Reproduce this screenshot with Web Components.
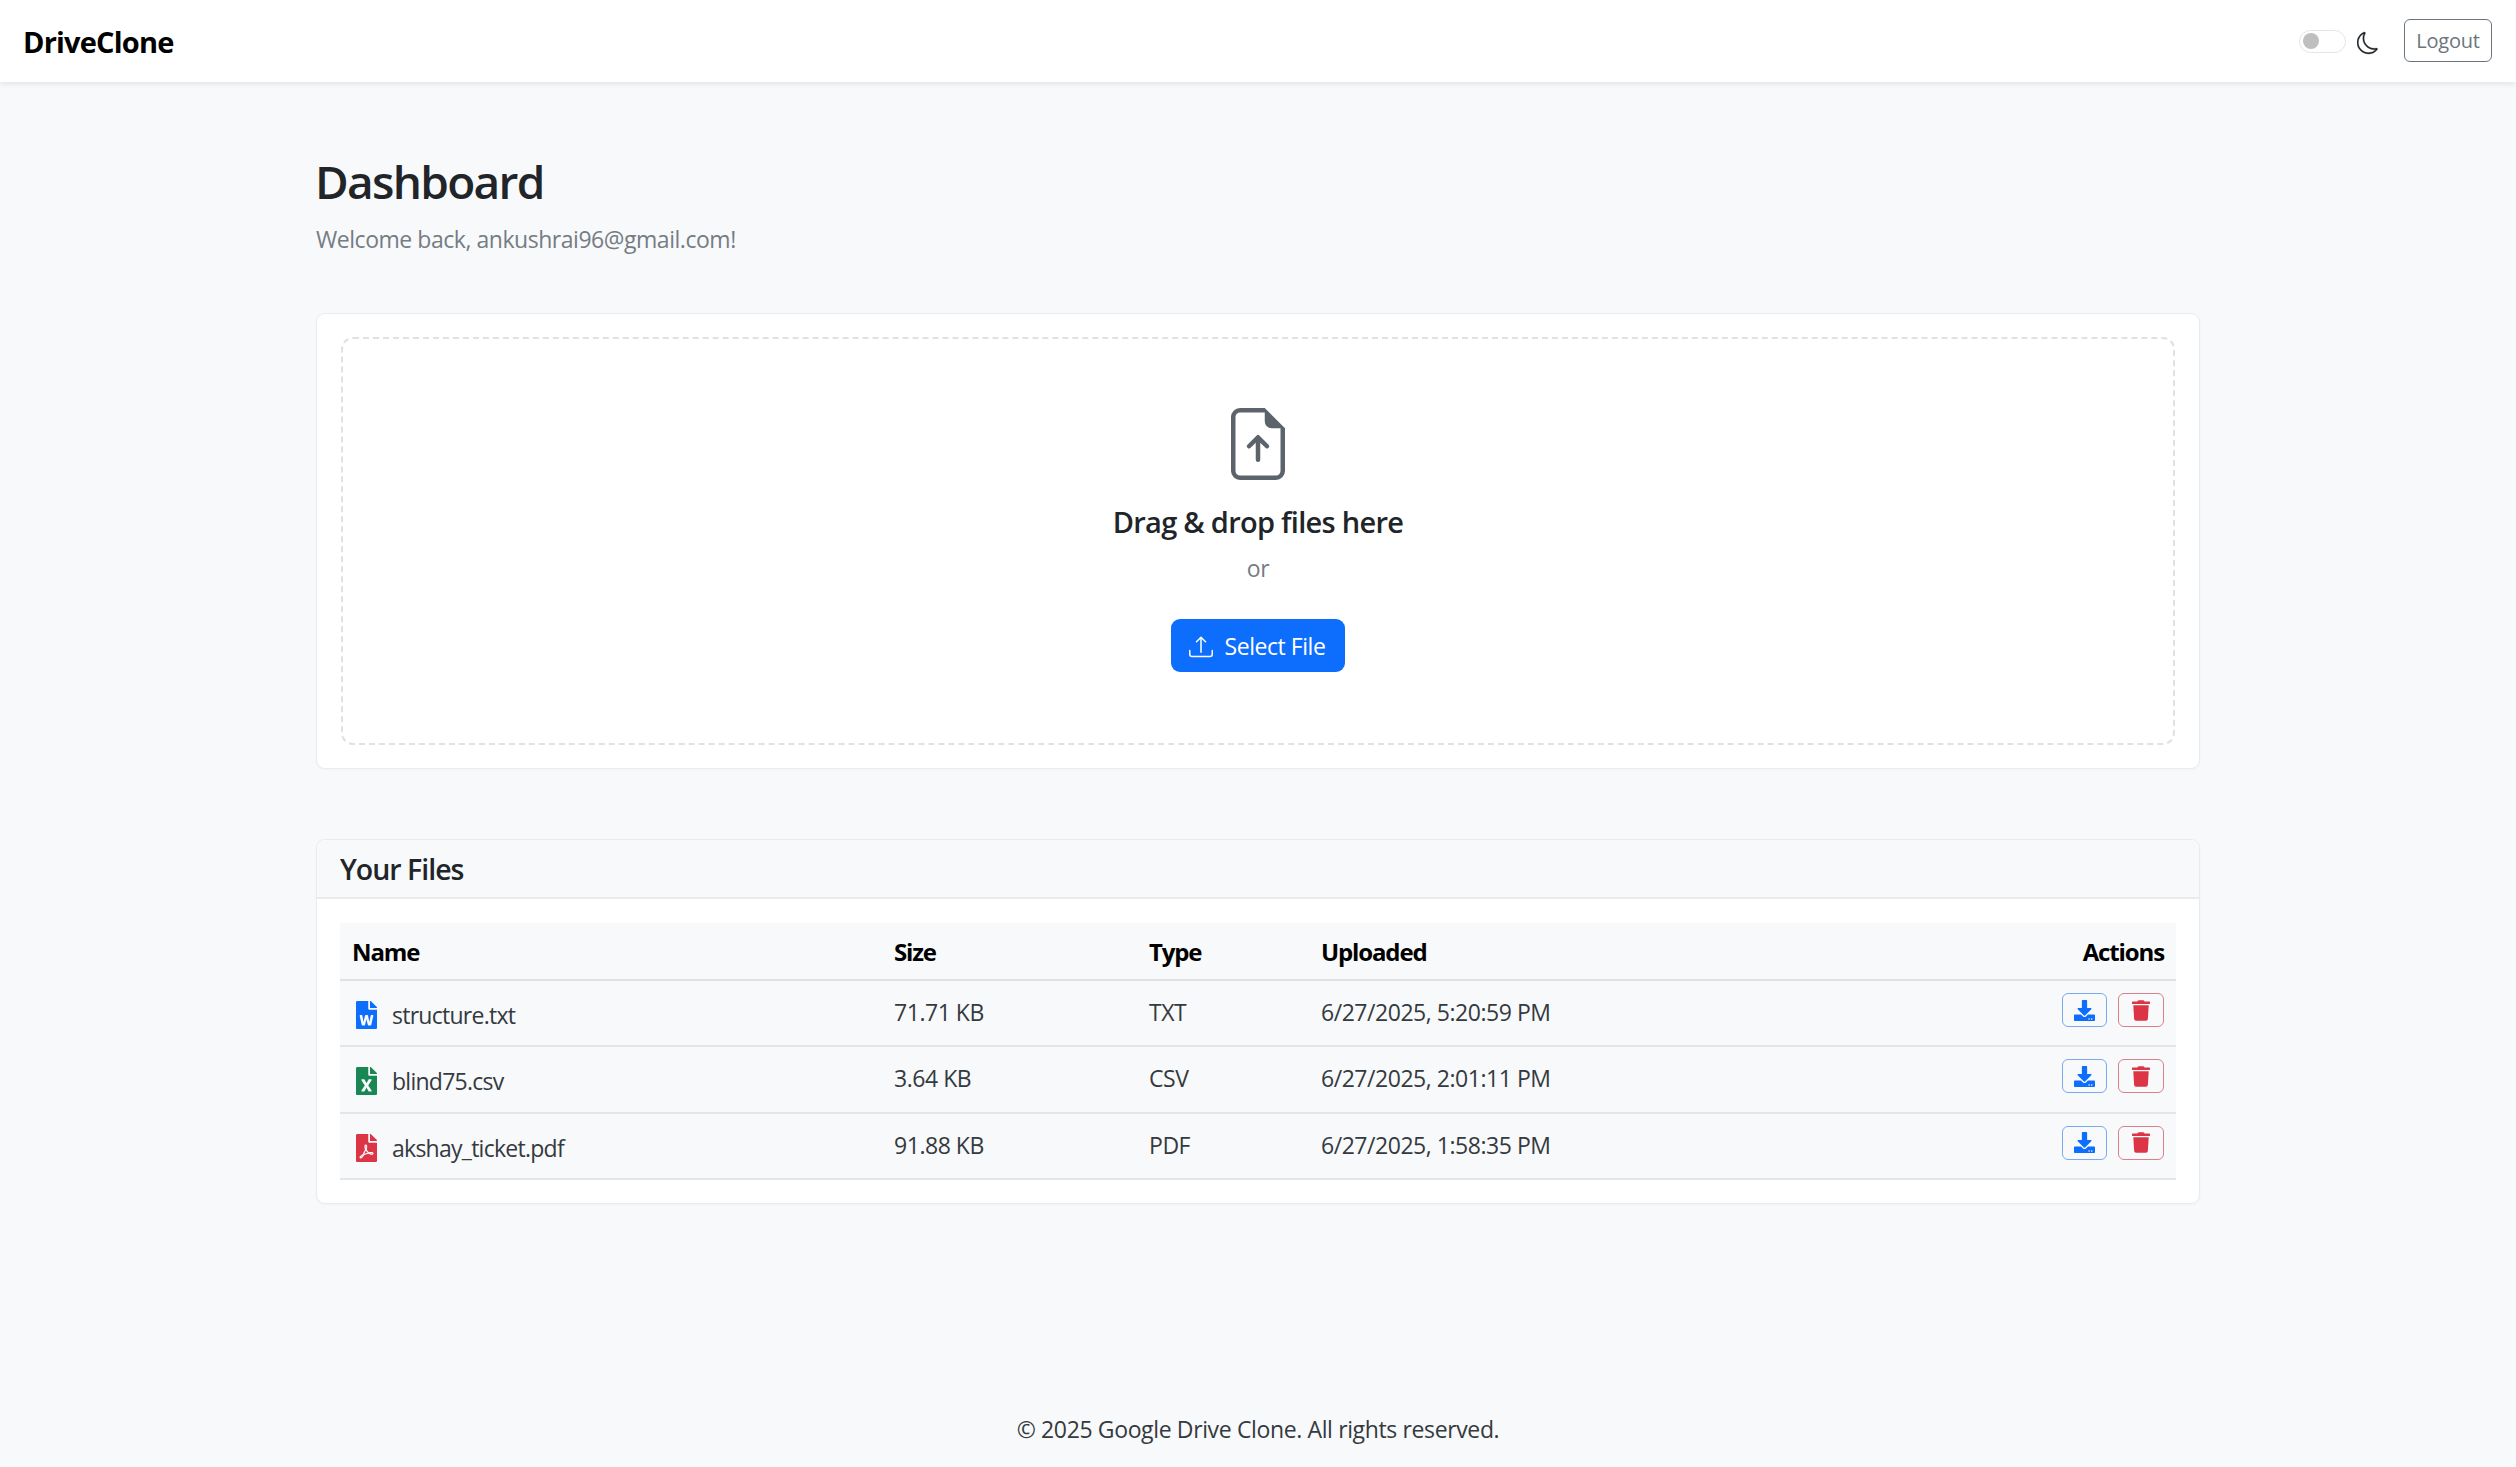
<!DOCTYPE html>
<html lang="en"><head><meta charset="utf-8"><title>DriveClone</title>
<style>
html,body{margin:0;padding:0}
body{background:#f8f9fa;color:#212529;font-family:"Open Sans","Noto Sans",sans-serif;font-size:23px;min-height:1467px;display:flex;flex-direction:column;letter-spacing:-.02em}
</style></head><body>
<app-navbar brand="DriveClone"></app-navbar>
<app-dashboard email="ankushrai96@gmail.com">
  <upload-card></upload-card>
  <files-card title="Your Files">
    <file-row icon="word" size="71.71 KB" type="TXT" uploaded="6/27/2025, 5:20:59 PM">structure.txt</file-row>
    <file-row icon="excel" size="3.64 KB" type="CSV" uploaded="6/27/2025, 2:01:11 PM">blind75.csv</file-row>
    <file-row icon="pdf" size="91.88 KB" type="PDF" uploaded="6/27/2025, 1:58:35 PM">akshay_ticket.pdf</file-row>
  </files-card>
</app-dashboard>
<app-footer>© 2025 Google Drive Clone. All rights reserved.</app-footer>
<script>
const ICONS={
word:'M224 136V0H24C10.7 0 0 10.7 0 24v464c0 13.3 10.7 24 24 24h336c13.3 0 24-10.7 24-24V160H248c-13.2 0-24-10.8-24-24zm57.1 120H305c7.7 0 13.4 7.1 11.7 14.7l-38 168c-1.2 5.5-6.1 9.3-11.7 9.3h-38c-5.5 0-10.3-3.8-11.6-9.1-25.8-103.5-20.8-81.2-25.6-110.5h-.5c-1.1 14.3-2.4 17.4-25.6 110.5-1.3 5.3-6.1 9.1-11.6 9.1H117c-5.6 0-10.5-3.9-11.7-9.4l-37.8-168c-1.7-7.5 4-14.6 11.7-14.6h24.5c5.7 0 10.7 4 11.8 9.7 15.6 78 20.1 109.5 21 122.2 1.6-10.2 7.3-32.7 29.4-122.7 1.3-5.4 6.1-9.1 11.7-9.1h29.1c5.6 0 10.4 3.8 11.7 9.2 24 100.4 28.8 124 29.6 129.4-.2-11.2-2.6-17.8 21.6-129.2 1-5.6 5.9-9.5 11.5-9.5zM384 121.9v6.1H256V0h6.1c6.4 0 12.5 2.5 17 7l97.9 98c4.5 4.5 7 10.6 7 16.9z',
excel:'M224 136V0H24C10.7 0 0 10.7 0 24v464c0 13.3 10.7 24 24 24h336c13.3 0 24-10.7 24-24V160H248c-13.2 0-24-10.8-24-24zm60.1 106.5L224 336l60.1 93.5c5.1 8-.6 18.5-10.1 18.5h-34.9c-4.4 0-8.5-2.4-10.6-6.3C208.9 405.5 192 373 192 373c-6.4 14.8-10 20-36.6 68.8-2.1 3.9-6.1 6.3-10.5 6.3H110c-9.5 0-15.2-10.5-10.1-18.5l60.3-93.5-60.3-93.5c-5.2-8 .6-18.5 10.1-18.5h34.8c4.4 0 8.5 2.4 10.6 6.3 26.1 48.8 20 33.6 36.6 68.5 0 0 6.1-11.7 36.6-68.5 2.1-3.9 6.2-6.3 10.6-6.3H274c9.5-.1 15.2 10.4 10.1 18.4zM384 121.9v6.1H256V0h6.1c6.4 0 12.5 2.5 17 7l97.9 98c4.5 4.5 7 10.6 7 16.9z',
pdf:'M181.9 256.1c-5-16-4.9-46.9-2-46.9 8.4 0 7.6 36.9 2 46.9zm-1.7 47.2c-7.7 20.2-17.3 43.3-28.4 62.7 18.3-7 39-17.2 62.9-21.9-12.7-9.6-24.9-23.4-34.5-40.8zM86.1 428.1c0 .8 13.2-5.4 34.9-40.2-6.7 6.3-29.1 24.5-34.9 40.2zM248 160h136v328c0 13.3-10.7 24-24 24H24c-13.3 0-24-10.7-24-24V24C0 10.7 10.7 0 24 0h200v136c0 13.2 10.8 24 24 24zm-8 171.8c-20-12.2-33.3-29-42.7-53.8 4.5-18.5 11.6-46.6 6.2-64.2-4.7-29.4-42.4-26.5-47.8-6.8-5 18.3-.4 44.1 8.1 77-11.6 27.6-28.7 64.6-40.8 85.8-.1 0-.1.1-.2.1-27.1 13.9-73.6 44.5-54.5 68 5.6 6.9 16 10 21.5 10 17.9 0 35.7-18 61.1-61.8 25.8-8.5 54.1-19.1 79-23.2 21.7 11.8 47.1 19.5 64 19.5 29.2 0 31.2-32 19.7-43.4-13.9-13.6-54.3-9.7-73.6-7.2zM377 105L279 7c-4.5-4.5-10.6-7-17-7h-6v128h128v-6.1c0-6.3-2.5-12.4-7-16.9zm-74.1 255.3c4.1-2.7-2.5-11.9-42.8-9 37.1 15.8 42.8 9 42.8 9z'};
const COL={word:'#0d6efd',excel:'#198754',pdf:'#dc3545'};
const DL='M216 0h80c13.3 0 24 10.7 24 24v168h87.7c17.8 0 26.7 21.5 14.1 34.1L269.7 378.3c-7.5 7.5-19.8 7.5-27.3 0L90.1 226.1c-12.6-12.6-3.7-34.1 14.1-34.1H192V24c0-13.3 10.7-24 24-24zm296 376v112c0 13.3-10.7 24-24 24H24c-13.3 0-24-10.7-24-24V376c0-13.3 10.7-24 24-24h146.7l49 49c20.1 20.1 52.5 20.1 72.6 0l49-49H488c13.3 0 24 10.7 24 24zm-124 88c0-11-9-20-20-20s-20 9-20 20 9 20 20 20 20-9 20-20zm64 0c0-11-9-20-20-20s-20 9-20 20 9 20 20 20 20-9 20-20z';
const TR='M432 32H312l-9.4-18.7A24 24 0 0 0 281.1 0H166.8a23.72 23.72 0 0 0-21.4 13.3L136 32H16A16 16 0 0 0 0 48v32a16 16 0 0 0 16 16h416a16 16 0 0 0 16-16V48a16 16 0 0 0-16-16zM53.2 467a48 48 0 0 0 47.9 45h245.8a48 48 0 0 0 47.9-45L416 128H32z';
function el(name,build){customElements.define(name,class extends HTMLElement{constructor(){super();this.attachShadow({mode:'open'})}connectedCallback(){this.shadowRoot.innerHTML=build(this)}})}
el('app-navbar',h=>`<style>
:host{display:flex;align-items:center;height:82px;background:#fff;box-shadow:0 2px 6px rgba(0,0,0,.09);padding:0 24px 0 23px;box-sizing:border-box;position:relative}
.brand{font-size:29px;font-weight:700;color:#000;margin-right:auto;letter-spacing:-.028em}
.sw{width:47px;height:23px;box-sizing:border-box;border:1px solid #e3e5e8;border-radius:12px;background:#fff;display:flex;align-items:center;padding-left:3px;margin-right:11px}
.sw i{width:16px;height:16px;border-radius:50%;background:#bfbfbf;display:block}
.moon{width:22px;height:24px;display:block;margin:4px 25px 0 0;fill:#212529;stroke:#212529;stroke-width:.2}
.out{font:inherit;font-size:20px;letter-spacing:-.012em;color:#6c757d;background:none;border:1px solid #6c757d;border-radius:6px;width:88px;height:43px;padding:0;margin-top:-1px}
</style><span class="brand">${h.getAttribute('brand')}</span><span class="sw"><i></i></span>
<svg class="moon" viewBox="0 0 16 16"><path d="M6 .278a.768.768 0 0 1 .08.858 7.208 7.208 0 0 0-.878 3.46c0 4.021 3.278 7.277 7.318 7.277.527 0 1.04-.055 1.533-.16a.787.787 0 0 1 .81.316.733.733 0 0 1-.031.893A8.349 8.349 0 0 1 8.344 16C3.734 16 0 12.286 0 7.71 0 4.266 2.114 1.312 5.124.06A.75.75 0 0 1 6 .278zM4.858 1.311A7.269 7.269 0 0 0 1.025 7.71c0 4.02 3.279 7.276 7.319 7.276a7.316 7.316 0 0 0 5.205-2.162c-.337.042-.68.063-1.029.063-4.61 0-8.343-3.714-8.343-8.29 0-1.167.242-2.278.681-3.286z"/></svg>
<button class="out">Logout</button>`);
el('app-dashboard',h=>`<style>
:host{display:block;width:1884px;margin:0 auto;padding-top:70px}
h1{font-size:46px;font-weight:600;line-height:58px;margin:0 0 11px;letter-spacing:-.037em;text-indent:-1px}
p{margin:0 0 56px;color:#757c84;line-height:36px;height:36px}
</style><h1>Dashboard</h1><p>Welcome back, ${h.getAttribute('email')}!</p><slot></slot>`);
el('upload-card',()=>`<style>
:host{display:block;background:#fff;border:1px solid #e9ecef;border-radius:9px;padding:23px 24px;box-shadow:0 1px 3px rgba(0,0,0,.03);margin-bottom:70px}
.drop{border:2px dashed #dee2e6;border-radius:12px;height:408px;box-sizing:border-box;display:flex;flex-direction:column;align-items:center;padding-top:69px}
svg.f{width:72px;height:72px;fill:#5c636a;display:block}
h5{font-size:29px;font-weight:600;line-height:36px;margin:24px 0 0;color:#212529;letter-spacing:-.025em}
.or{color:#757c84;margin-top:10px;line-height:36px}
button{font:inherit;letter-spacing:inherit;color:#fff;background:#0d6efd;border:0;border-radius:9px;width:174px;height:53px;margin-top:33px;display:flex;align-items:center;justify-content:center;gap:12px;padding:0 2px 0 0}
button svg{width:24px;height:24px;fill:#fff;margin-top:3px}
</style><div class="drop">
<svg class="f" viewBox="0 0 16 16"><path d="M8.5 11.5a.5.5 0 0 1-1 0V7.707L6.354 8.854a.5.5 0 1 1-.708-.708l2-2a.5.5 0 0 1 .708 0l2 2a.5.5 0 0 1-.708.708L8.5 7.707V11.5z"/><path d="M14 14V4.5L9.5 0H4a2 2 0 0 0-2 2v12a2 2 0 0 0 2 2h8a2 2 0 0 0 2-2zM9.5 3A1.5 1.5 0 0 0 11 4.5h2V14a1 1 0 0 1-1 1H4a1 1 0 0 1-1-1V2a1 1 0 0 1 1-1h5.5v2z"/></svg>
<h5>Drag &amp; drop files here</h5><div class="or">or</div>
<button><svg viewBox="0 0 16 16"><path d="M.5 9.9a.5.5 0 0 1 .5.5v2.5a1 1 0 0 0 1 1h12a1 1 0 0 0 1-1v-2.5a.5.5 0 0 1 1 0v2.5a2 2 0 0 1-2 2H2a2 2 0 0 1-2-2v-2.5a.5.5 0 0 1 .5-.5z"/><path d="M7.646 1.146a.5.5 0 0 1 .708 0l3 3a.5.5 0 0 1-.708.708L8.5 2.707V11.5a.5.5 0 0 1-1 0V2.707L5.354 4.854a.5.5 0 1 1-.708-.708l3-3z"/></svg>Select File</button></div>`);
const GRID='grid-template-columns:542px 255px 172px 1fr auto';
el('files-card',h=>`<style>
:host{display:block;background:#fff;border:1px solid #e9ecef;border-radius:9px;box-shadow:0 1px 3px rgba(0,0,0,.03)}
header{background:#f8f9fa;border-bottom:2px solid #e9ecef;border-radius:9px 9px 0 0;height:57px;padding:0 23px;display:flex;align-items:center;font-size:28.5px;font-weight:600;letter-spacing:-.035em}
.b{padding:24px 23px 23px}
.hd{display:grid;${GRID};background:#f8f9fa;height:56px;align-items:center;border-bottom:2px solid #dee2e6;font-size:24px;font-weight:700;color:#000;padding:0 12px 0 12px;letter-spacing:-.047em}
</style><header>${h.getAttribute('title')}</header><div class="b"><div class="hd"><span>Name</span><span>Size</span><span>Type</span><span>Uploaded</span><span>Actions</span></div><slot></slot></div>`);
el('file-row',h=>{const k=h.getAttribute('icon');return `<style>
:host{display:grid;${GRID};background:#f8f9fa;height:66.33px;box-sizing:border-box;align-items:center;border-bottom:2px solid #e3e5e8;padding:0 12px 2px;color:#343a40}
.n{display:flex;align-items:center;gap:15px;padding:6px 0 0 4px;letter-spacing:-.032em}
.n svg{width:21px;height:28px;fill:${COL[k]};display:block;flex:none}
.a{display:flex;gap:11px;margin-top:-4px}
.btn{height:34px;box-sizing:border-box;border-radius:6px;display:flex;align-items:center;justify-content:center;border:1.5px solid}
.d{width:45px;border-color:#7aaaf2}.r{width:46px;border-color:#d8808a}
.d svg{width:21px;height:21px;fill:#0d6efd}.r svg{width:18px;height:21px;fill:#dc3545}
</style><span class="n"><svg viewBox="0 0 384 512"><path d="${ICONS[k]}"/></svg><slot></slot></span><span>${h.getAttribute('size')}</span><span>${h.getAttribute('type')}</span><span>${h.getAttribute('uploaded')}</span>
<span class="a"><span class="btn d"><svg viewBox="0 0 512 512"><path d="${DL}"/></svg></span><span class="btn r"><svg viewBox="0 0 448 512"><path d="${TR}"/></svg></span></span>`});
el('app-footer',()=>`<style>
:host{display:block;margin-top:auto;text-align:center;padding:0 0 20px;line-height:36px;color:#343a40;letter-spacing:-.016em}
</style><slot></slot>`);
</script>
</body></html>
